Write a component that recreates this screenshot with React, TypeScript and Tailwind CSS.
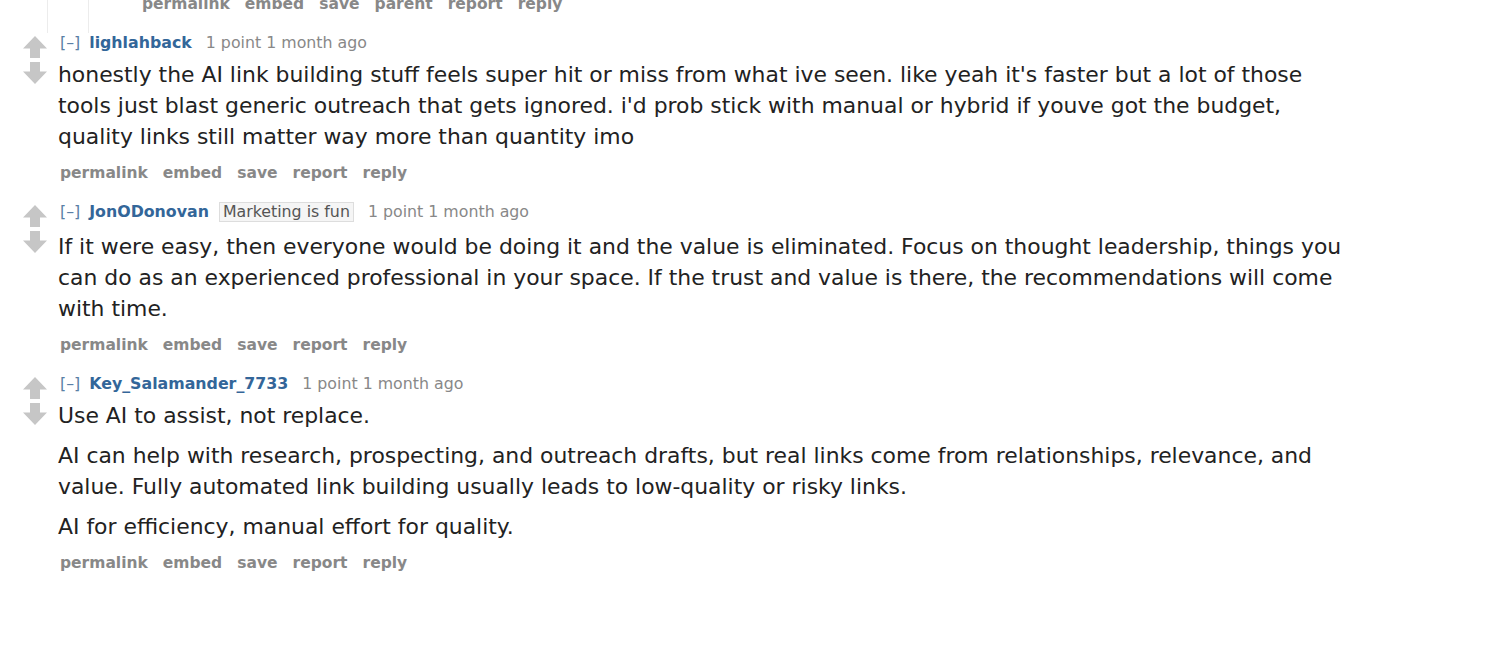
import React from "react";

type Comment = {
  author: string;
  flair?: string;
  score: string;
  age: string;
  paragraphs: string[];
};

const comments: Comment[] = [
  {
    author: "lighlahback",
    score: "1 point",
    age: "1 month ago",
    paragraphs: [
      "honestly the AI link building stuff feels super hit or miss from what ive seen. like yeah it's faster but a lot of those tools just blast generic outreach that gets ignored. i'd prob stick with manual or hybrid if youve got the budget, quality links still matter way more than quantity imo",
    ],
  },
  {
    author: "JonODonovan",
    flair: "Marketing is fun",
    score: "1 point",
    age: "1 month ago",
    paragraphs: [
      "If it were easy, then everyone would be doing it and the value is eliminated. Focus on thought leadership, things you can do as an experienced professional in your space. If the trust and value is there, the recommendations will come with time.",
    ],
  },
  {
    author: "Key_Salamander_7733",
    score: "1 point",
    age: "1 month ago",
    paragraphs: [
      "Use AI to assist, not replace.",
      "AI can help with research, prospecting, and outreach drafts, but real links come from relationships, relevance, and value. Fully automated link building usually leads to low-quality or risky links.",
      "AI for efficiency, manual effort for quality.",
    ],
  },
];

function Arrow({ down = false }: { down?: boolean }) {
  return (
    <svg width="24" height="22" viewBox="0 0 24 22" className="block">
      <path
        d="M12 0 L24 12.5 L17 12.5 L17 22 L7 22 L7 12.5 L0 12.5 Z"
        fill="#c6c6c6"
        transform={down ? "rotate(180 12 11)" : undefined}
      />
    </svg>
  );
}

function Buttons({ items }: { items: string[] }) {
  return (
    <ul className="flex h-[20px] items-center gap-[15px] text-[15.5px] font-bold leading-[20px] text-[#888]">
      {items.map((b) => (
        <li key={b}>{b}</li>
      ))}
    </ul>
  );
}

function CommentRow({ c }: { c: Comment }) {
  return (
    <div className="flex">
      <div className="ml-[23px] flex w-[35px] shrink-0 flex-col gap-[4px] pt-[3px]">
        <Arrow />
        <Arrow down />
      </div>
      <div className="min-w-0">
        <div className="ml-[2px] flex h-[20px] items-center text-[15.8px] leading-[20px] text-[#888]">
          <span className="text-[#5a7fa6]">[–]</span>
          <span className="ml-[9px] font-bold text-[#336699]">{c.author}</span>
          {c.flair && (
            <span className="ml-[10px] border border-[#ddd] bg-[#f5f5f5] px-[3px] leading-[18px] text-[#545454]">
              {c.flair}
            </span>
          )}
          <span className="ml-[14px]">
            {c.score} {c.age}
          </span>
        </div>
        <div
          className={`${c.flair ? "mt-[9px]" : "mt-[6px]"} w-[1298px] text-[21.9px] leading-[31px] text-[#222]`}
        >
          {c.paragraphs.map((p, i) => (
            <p key={i} className={i > 0 ? "mt-[9px]" : ""}>
              {p}
            </p>
          ))}
        </div>
        <div className="ml-[2px] mt-[11px]">
          <Buttons items={["permalink", "embed", "save", "report", "reply"]} />
        </div>
      </div>
    </div>
  );
}

export default function App() {
  return (
    <div
      className="min-h-[650px] overflow-hidden bg-white"
      style={{ fontFamily: '"DejaVu Sans", Verdana, sans-serif' }}
    >
      {/* tail of the parent thread above */}
      <div className="ml-[47px] flex h-[33px] border-l border-[#ececec]">
        <div className="ml-[40px] flex h-full border-l border-[#ececec]">
          <div className="-mt-[6px] ml-[53px]">
            <Buttons items={["permalink", "embed", "save", "parent", "report", "reply"]} />
          </div>
        </div>
      </div>
      <div className="flex flex-col gap-[19px]">
        {comments.map((c) => (
          <CommentRow key={c.author} c={c} />
        ))}
      </div>
    </div>
  );
}
